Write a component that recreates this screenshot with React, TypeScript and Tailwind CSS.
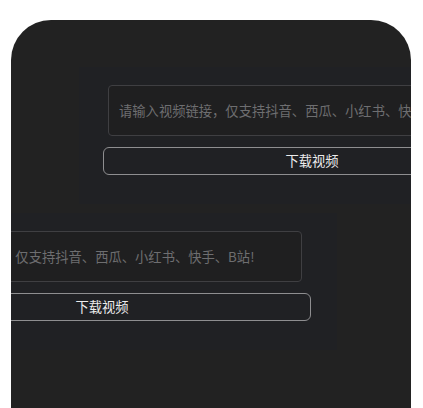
import React from 'react'

const Downloader: React.FC<{ className?: string }> = ({ className = '' }) => {
  return (
    <div className={`w-[468px] h-[137px] shrink-0 bg-[#202124] pt-[18px] flex flex-col ${className}`}>
      {/* Link input */}
      <div className="ml-[29px] w-[404px] h-[51px] rounded-[4px] border border-[#3f3f42] bg-[#1f1f20] flex items-center pl-[10px] pr-[11px]">
        <span className="text-[13.3px] text-[#6e6e70] whitespace-nowrap">
          请输入视频链接，仅支持抖音、西瓜、小红书、快手、B站!
        </span>
      </div>
      {/* Download button */}
      <button className="ml-[24px] mt-[11px] w-[418px] h-[28px] rounded-[6px] border border-[#8e8e90] bg-transparent text-[13.3px] text-[#ececec] flex items-center justify-center">
        下载视频
      </button>
    </div>
  )
}

export default function App() {
  return (
    <div className="w-[423px] h-[408px] bg-white overflow-hidden pt-[20px] pl-[11px] font-['Noto_Sans_CJK_SC','Noto_Sans',sans-serif]">
      <div className="w-[400px] h-[400px] rounded-t-[40px] bg-[#222222] overflow-hidden flex flex-col">
        <Downloader className="mt-[47px] ml-[68px]" />
        <Downloader className="mt-[9px] ml-[-142px]" />
      </div>
    </div>
  )
}
